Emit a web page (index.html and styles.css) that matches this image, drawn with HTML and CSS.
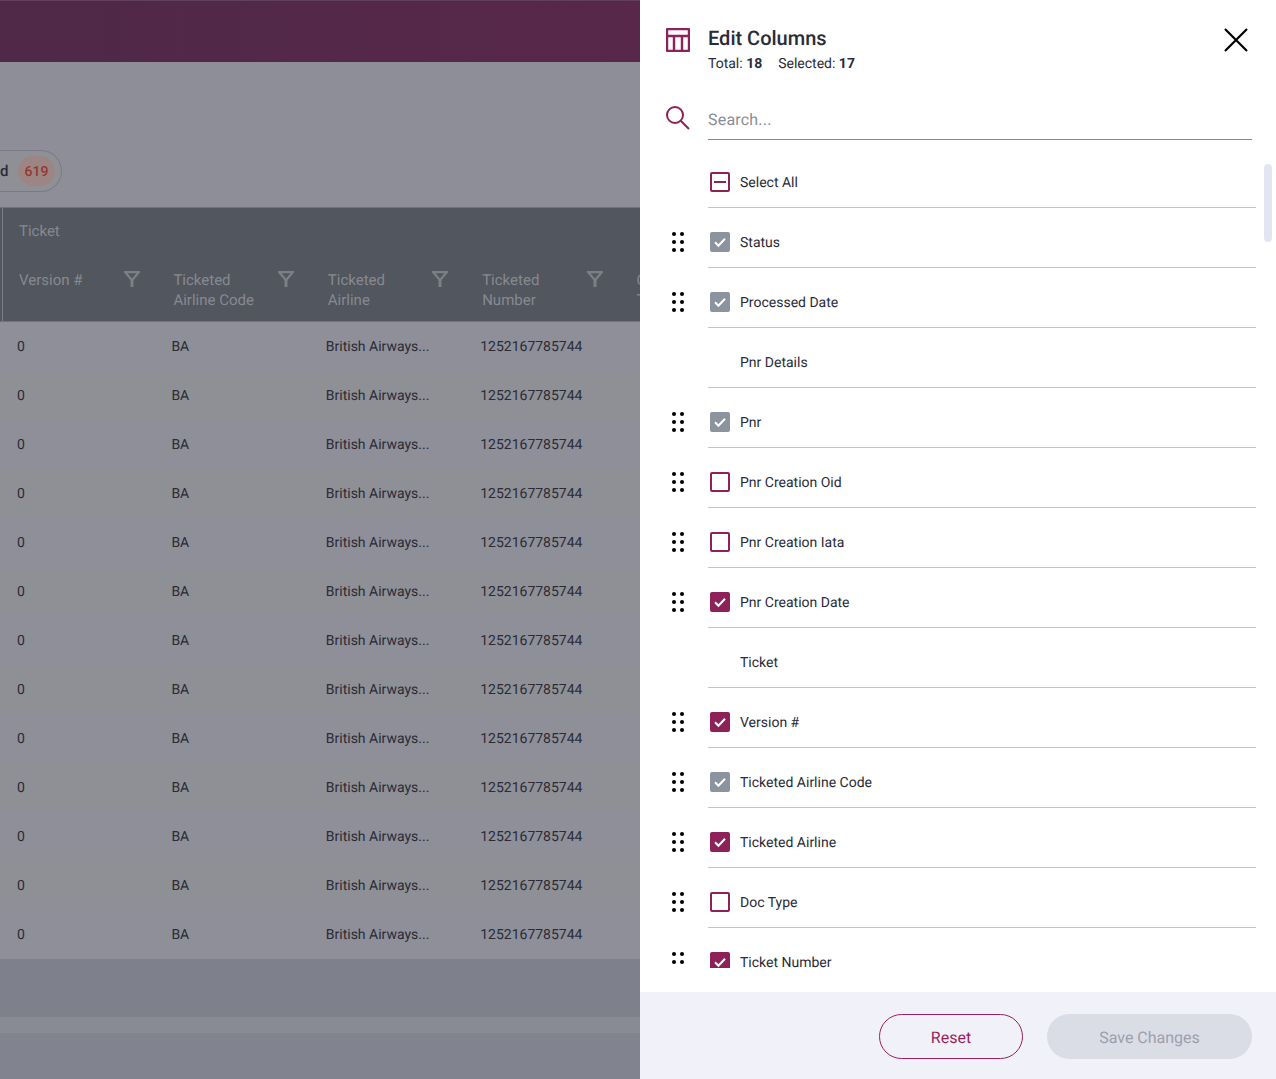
FILE: index.html
```html
<!DOCTYPE html>
<html lang="en">
<head>
<meta charset="utf-8">
<title>Edit Columns</title>
<link rel="stylesheet" href="styles.css">
</head>
<body>
<div class="page">
  <main class="backdrop">
    <div class="topbar"></div>
    <div class="toolbar">
      <div class="pill"><span class="pill-label">d</span><span class="badge">619</span></div>
    </div>
    <div class="thead">
      <div class="group">Ticket</div>
      <div class="cols">
        <div class="th"><span>Version #</span><svg class="funnel" viewBox="0 0 16 16"><path class="funnel-cup" d="M1.200 1.100h13.600L8 9.300z"/><path class="funnel-stem" d="M8 8.500V16"/></svg></div>
        <div class="th"><span>Ticketed<br>Airline Code</span><svg class="funnel" viewBox="0 0 16 16"><path class="funnel-cup" d="M1.200 1.100h13.600L8 9.300z"/><path class="funnel-stem" d="M8 8.500V16"/></svg></div>
        <div class="th"><span>Ticketed<br>Airline</span><svg class="funnel" viewBox="0 0 16 16"><path class="funnel-cup" d="M1.200 1.100h13.600L8 9.300z"/><path class="funnel-stem" d="M8 8.500V16"/></svg></div>
        <div class="th"><span>Ticketed<br>Number</span><svg class="funnel" viewBox="0 0 16 16"><path class="funnel-cup" d="M1.200 1.100h13.600L8 9.300z"/><path class="funnel-stem" d="M8 8.500V16"/></svg></div>
        <div class="th"><span>Coupon<br>Type</span></div>
      </div>
    </div>
    <div class="tbody" id="tbody"></div>
    <div class="strip-a"></div>
    <div class="strip-b"></div>
    <div class="strip-c"></div>
  </main>
  <aside class="panel">
    <header class="panel-head">
      <svg class="icon icon-table" viewBox="0 0 24 24"><path d="M2 1h20a1 1 0 0 1 1 1v20a1 1 0 0 1-1 1H2a1 1 0 0 1-1-1V2a1 1 0 0 1 1-1zM1 8h22M8 8v15M16 8v15"/></svg>
      <div class="titles">
        <h1>Edit Columns</h1>
        <p>Total: <b>18</b><span class="gap"></span>Selected: <b>17</b></p>
      </div>
      <svg class="close" viewBox="0 0 24 24"><path d="M1 1l22 22M23 1L1 23"/></svg>
    </header>
    <div class="search">
      <svg class="icon" viewBox="0 0 24 24"><circle cx="9" cy="9" r="8"/><path d="M14.700 14.700L23 23"/></svg>
      <div class="search-field">Search...</div>
    </div>
    <div class="list" id="list"></div>
    <div class="thumb"></div>
    <footer class="foot">
      <button class="btn btn-reset">Reset</button>
      <button class="btn btn-save">Save Changes</button>
    </footer>
  </aside>
</div>
<script src="app.js"></script>
</body>
</html>
```

FILE: app.js
```js
var tbody = document.getElementById('tbody');
for (var i = 0; i < 13; i++) {
  var r = document.createElement('div');
  r.className = 'tr';
  ['0', 'BA', 'British Airways...', '1252167785744'].forEach(function (t) {
    var c = document.createElement('div');
    c.className = 'td';
    c.textContent = t;
    r.appendChild(c);
  });
  tbody.appendChild(r);
}
var items = [
  ['Select All', 'minus', false],
  ['Status', 'grey', true],
  ['Processed Date', 'grey', true],
  ['Pnr Details', '', false],
  ['Pnr', 'grey', true],
  ['Pnr Creation Oid', 'empty', true],
  ['Pnr Creation Iata', 'empty', true],
  ['Pnr Creation Date', 'on', true],
  ['Ticket', '', false],
  ['Version #', 'on', true],
  ['Ticketed Airline Code', 'grey', true],
  ['Ticketed Airline', 'on', true],
  ['Doc Type', 'empty', true],
  ['Ticket Number', 'on', true]
];
var grip = '<svg class="grip" viewBox="0 0 12 20"><circle cx="2" cy="2" r="2"/><circle cx="10" cy="2" r="2"/><circle cx="2" cy="10" r="2"/><circle cx="10" cy="10" r="2"/><circle cx="2" cy="18" r="2"/><circle cx="10" cy="18" r="2"/></svg>';
var check = '<svg viewBox="0 0 20 20"><path d="M5 10.300l3.400 3.400L15 6.800"/></svg>';
var minus = '<svg viewBox="0 0 20 20"><path d="M2.500 10h15"/></svg>';
var list = document.getElementById('list');
items.forEach(function (it) {
  var row = document.createElement('div');
  row.className = 'row';
  var kind = it[1];
  var box = '';
  if (kind) {
    box = '<span class="box box-' + kind + '">' + (kind === 'minus' ? minus : kind === 'empty' ? '' : check) + '</span>';
  } else {
    box = '<span class="box box-none"></span>';
  }
  row.innerHTML = '<span class="grip-cell">' + (it[2] ? grip : '') + '</span><div class="row-body">' + box + '<span class="row-label">' + it[0] + '</span></div>';
  list.appendChild(row);
});
```

FILE: styles.css
```css
* { box-sizing: border-box; }
html, body { margin: 0; height: 100%; }
body { font-family: Roboto, "Liberation Sans", sans-serif; overflow: hidden; text-rendering: geometricPrecision; }
.page { display: flex; width: 1276px; height: 1079px; }

.backdrop { width: 640px; flex: none; background: #8d8e98; overflow: hidden; display: flex; flex-direction: column; }
.topbar { height: 62px; flex: none; background: linear-gradient(90deg, #4f2947, #58274a); border-top: 1px solid #62405b; }
.toolbar { height: 145px; flex: none; padding-top: 88px; }
.pill { width: 62px; height: 42px; border: 1px solid #797a84; border-left: 0; border-radius: 0 21px 21px 0; background: #8f9096; display: flex; align-items: center; gap: 9px; }
.pill-label { font-size: 15px; font-weight: 500; color: #2a2b35; width: 9px; overflow: hidden; }
.badge { width: 37px; height: 30px; padding-top: 2px; border-radius: 15px; background: #9d8583; color: #93382f; font-size: 14px; font-weight: 500; display: flex; align-items: center; justify-content: center; }

.thead { height: 115px; flex: none; background: #52565f; border-top: 1px solid #70737d; border-bottom: 1px solid #70737d; position: relative; }
.thead::before { content: ""; position: absolute; left: 2px; top: 0; bottom: 0; width: 1px; background: #7b7e87; }
.group { padding: 14px 0 0 19px; height: 48px; font-size: 15px; line-height: 18px; color: #878990; }
.cols { display: flex; padding-left: 19px; }
.th { width: 154.400px; flex: none; display: flex; padding-right: 34px; font-size: 15px; line-height: 20px; color: #878990; position: relative; white-space: nowrap; height: 65px; padding-top: 14px; }
.funnel { position: absolute; left: 104.500px; top: 15px; width: 16px; height: 16px; fill: none; stroke: #7d7f86; }
.funnel-cup { stroke-width: 2.200; }
.funnel-stem { stroke-width: 3; }

.tr { height: 49px; display: flex; padding-left: 17px; align-items: center; font-size: 14px; color: #2a2b35; background: #8e8f99; }
.tr:nth-child(even) { background: #8f9095; }
.td { width: 154.400px; flex: none; }

.strip-a { height: 58px; flex: none; background: #7e808b; }
.strip-b { height: 16px; flex: none; background: #8a8a94; }
.strip-c { flex: 1; background: #81838e; }

.panel { width: 636px; flex: none; background: #fff; display: flex; flex-direction: column; position: relative; }
.panel-head { display: flex; padding: 28px 28px 0 26px; height: 92px; flex: none; }
.icon { width: 24px; height: 24px; flex: none; fill: none; stroke: #8f2159; stroke-width: 2; }
.icon-table { stroke-width: 2.400; }
.titles { margin: -1px 0 0 18px; flex: 1; }
h1 { margin: 0; font-size: 20px; font-weight: 500; line-height: 23px; color: #2a2b38; }
.titles p { margin: 5px 0 0; font-size: 14px; line-height: 18px; color: #2a2b38; }
.titles b { font-weight: 700; }
.gap { display: inline-block; width: 16px; }
.close { width: 24px; height: 24px; flex: none; fill: none; stroke: #000; stroke-width: 2.200; }
.search { display: flex; padding: 14px 24px 0 26px; height: 56px; flex: none; }
.search-field { margin-left: 18px; flex: 1; height: 34px; border-bottom: 1px solid #8a8a8a; font-size: 16px; line-height: 27px; letter-spacing: 0.200px; color: #8a8c94; }
.list { height: 820px; flex: none; overflow: hidden; }
.row { display: flex; height: 60px; padding-right: 20px; }
.grip-cell { width: 82px; flex: none; padding: 24px 0 0 32px; display: block; }
.grip { width: 12px; height: 20px; display: block; fill: #000; }
.row-body { flex: 1; display: flex; align-items: center; height: 60px; padding: 24px 0 15px 2px; border-bottom: 1px solid #c4c4c4; margin-left: -14px; }
.box { width: 20px; height: 20px; flex: none; border-radius: 2px; display: block; }
.box svg { display: block; width: 20px; height: 20px; fill: none; stroke-width: 2; stroke: #fff; }
.box-grey { background: #8b949e; }
.box-on { background: #8f2159; }
.box-empty, .box-minus { border: 2px solid #8f2159; }
.box-empty svg, .box-minus svg { width: 16px; height: 16px; stroke: #8f2159; stroke-width: 2.500; }
.row-label { margin: 2px 0 0 10px; line-height: 16px; font-size: 14px; color: #2a2b38; }
.thumb { position: absolute; left: 624px; top: 164px; width: 8px; height: 78px; border-radius: 4px; background: #e3e5f2; }
.foot { margin-top: auto; height: 87px; flex: none; background: #f1f2f9; display: flex; justify-content: flex-end; gap: 24px; padding: 22px 24px 20px 0; }
.btn { height: 45px; padding-top: 2px; border-radius: 23px; font: 400 16px Roboto, "Liberation Sans", sans-serif; text-rendering: geometricPrecision; }
.btn-reset { width: 144px; background: transparent; border: 1px solid #9c1f5c; color: #9c1f5c; }
.btn-save { width: 205px; background: #dadce6; border: 0; color: #9d9fad; }
```
